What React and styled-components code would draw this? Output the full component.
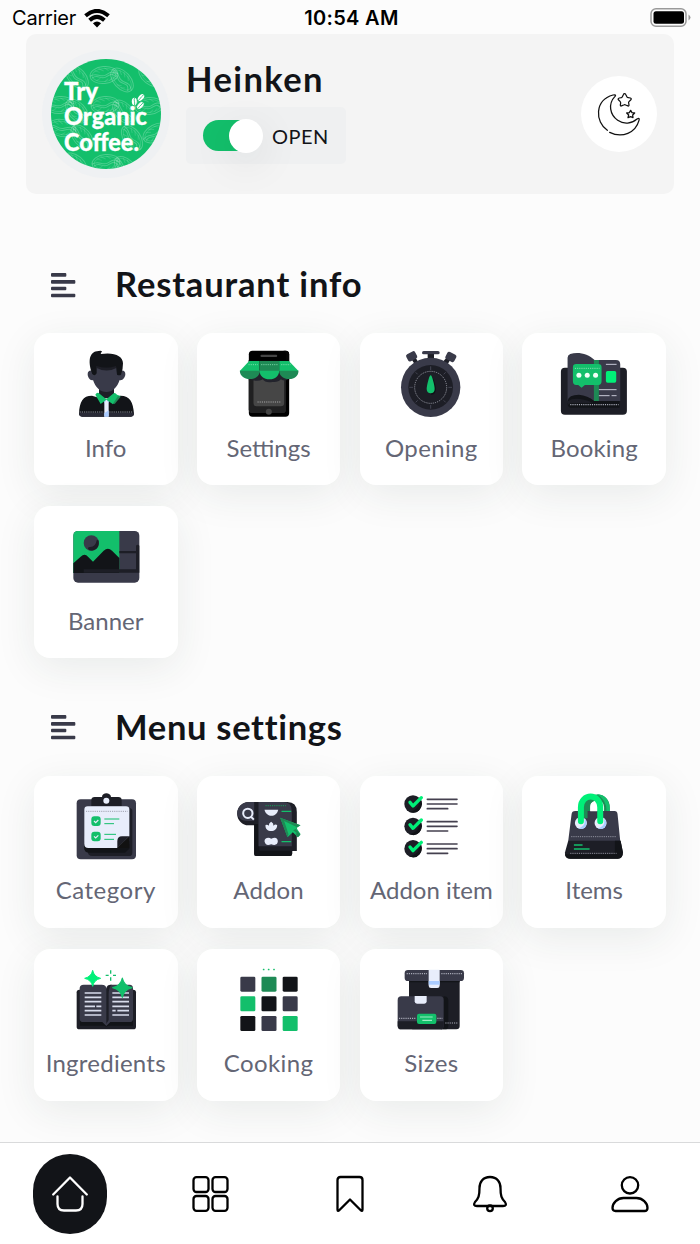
import React from "react";
import styled, { createGlobalStyle } from "styled-components";

const C = {
  ink: "#121418",
  black: "#1d1e26",
  slate: "#393a49",
  green: "#13bf6b",
  deep: "#1e8a55",
  lime: "#00f078",
  pale: "#e8edfb",
  sky: "#a9cbff",
};

const GlobalStyle = createGlobalStyle`
  *, *::before, *::after { box-sizing: border-box; }
  body { margin: 0; background: #fcfcfc; font-family: Lato, "Open Sans", sans-serif; }
`;

const Screen = styled.div`
  width: 700px;
  height: 1244px;
  display: flex;
  flex-direction: column;
  overflow: hidden;
  background: #fcfcfc;
  color: ${C.ink};
`;

const StatusBar = styled.header`
  height: 34px;
  flex: none;
  display: grid;
  grid-template-columns: 1fr auto 1fr;
  align-items: center;
  padding: 2px 9px 0 12px;
  font: 400 20px/32px Inter, sans-serif;
  color: #000;
`;

const Carrier = styled.div`
  display: flex;
  align-items: center;
  gap: 8px;
  letter-spacing: -0.2px;
`;

const Clock = styled.div`
  font-weight: 600;
  letter-spacing: 0.3px;
`;

const BatteryIcon = styled.svg`
  justify-self: end;
  display: block;
`;

const Profile = styled.section`
  height: 160px;
  flex: none;
  margin: 0 26px;
  padding: 0 17px 0 16px;
  display: flex;
  align-items: center;
  border-radius: 10px;
  background: #f4f4f4;
`;

const Avatar = styled.div`
  width: 128px;
  height: 128px;
  flex: none;
  display: grid;
  place-items: center;
  border-radius: 50%;
  background: #eff1f3;
`;

const ProfileBody = styled.div`
  flex: 1;
  padding: 0 0 7px 16px;
`;

const Name = styled.h1`
  margin: 0;
  height: 50px;
  font-size: 34.5px;
  line-height: 43px;
  font-weight: 700;
  letter-spacing: 1.4px;
`;

const OpenBox = styled.div`
  width: 160px;
  height: 57px;
  padding: 0 17px;
  display: flex;
  align-items: center;
  gap: 9px;
  border-radius: 5px;
  background: #eff0f1;
  font-size: 20px;
  letter-spacing: 0.45px;
`;

const Track = styled.span`
  width: 60px;
  height: 31px;
  display: flex;
  align-items: center;
  justify-content: flex-end;
  border-radius: 16px;
  background: linear-gradient(90deg, ${C.green} 46px, transparent 46px);
`;

const Thumb = styled.span`
  width: 34px;
  height: 34px;
  flex: none;
  border-radius: 50%;
  background: #fff;
  box-shadow: 0 10px 40px rgba(30, 40, 40, 0.1);
`;

const ThemeButton = styled.button`
  width: 76px;
  height: 76px;
  padding: 0;
  display: grid;
  place-items: center;
  border: 0;
  border-radius: 50%;
  background: #fff;
`;

const Heading = styled.h2`
  height: 48px;
  flex: none;
  margin: ${(p) => p.$top}px 0 24px;
  padding-left: 51px;
  display: flex;
  align-items: center;
  gap: 37px;
  font-size: 34.5px;
  line-height: 48px;
  font-weight: 700;
  letter-spacing: ${(p) => p.$track}px;
`;

const HeadingLabel = styled.span`
  padding-bottom: 2px;
`;

const Tiles = styled.div`
  flex: none;
  display: grid;
  grid-template-columns: repeat(4, 143.5px);
  grid-auto-rows: 152px;
  gap: 21.3px 19.3px;
  padding: 0 34px;
`;

const Tile = styled.div`
  display: flex;
  flex-direction: column;
  align-items: center;
  padding-top: 15px;
  border-radius: 16px;
  background: #fff;
  box-shadow: 0 10px 40px rgba(35, 60, 50, 0.085);
`;

const TileIcon = styled.svg`
  width: 72px;
  height: 72px;
  display: block;
`;

const TileLabel = styled.span`
  margin-top: 11.6px;
  font-size: 24px;
  line-height: 32px;
  color: #646675;
  white-space: nowrap;
  letter-spacing: ${(p) => p.$track}px;
`;

const NavBar = styled.nav`
  height: 102px;
  flex: none;
  margin-top: auto;
  display: grid;
  grid-template-columns: repeat(5, 1fr);
  place-items: center;
  border-top: 1px solid #d9dadb;
  background: #fff;
  z-index: 1;
`;

const NavItem = styled.a`
  width: 74px;
  height: 80px;
  display: grid;
  place-items: center;
  border-radius: 37px;
  color: ${(p) => (p.$active ? "#fff" : "#000")};
  background: ${(p) => (p.$active ? C.ink : "transparent")};
`;

const NavIcon = styled.svg`
  width: 40px;
  height: 40px;
  fill: none;
  stroke: currentColor;
  stroke-width: 2.3;
  stroke-linecap: round;
  stroke-linejoin: round;
`;

const Bean = ({ x, y, r = 0, s = 1 }) => (
  <g transform={`translate(${x} ${y}) rotate(${r}) scale(${s})`} fill="none" stroke="#fff" strokeOpacity="0.24" strokeWidth="1">
    <ellipse rx="14" ry="8.5" />
    <ellipse rx="12" ry="6.5" strokeOpacity="0.14" />
    <path d="M-14 0C-7-4-4 3 2 0S9-3 14 0M-12 2C-6-2-4 5 2 2S8-1 12 3" />
    <path d="M-9-5l5 2M-5-7l5 3M1-7l4 3M-8 5l4-2M0 7l4-3M5 6l3-3" strokeOpacity="0.14" />
  </g>
);

const CoffeeLogo = () => (
  <svg width="110" height="110" viewBox="51 59 110 110">
    <clipPath id="disc"><circle cx="106" cy="114" r="55" /></clipPath>
    <g clipPath="url(#disc)">
      <rect x="51" y="59" width="110" height="110" fill={C.green} />
      <Bean x={77} y={77} r={48} />
      <Bean x={104} y={75} r={-5} />
      <Bean x={122} y={80} r={48} />
      <Bean x={151} y={76} r={38} />
      <Bean x={60} y={105} r={-5} />
      <Bean x={77} y={111} r={48} />
      <Bean x={105} y={105} r={-5} />
      <Bean x={124} y={112} r={48} />
      <Bean x={149} y={106} r={-5} />
      <Bean x={82} y={137} r={50} />
      <Bean x={62} y={128} r={10} />
      <Bean x={132} y={138} r={55} />
      <Bean x={156} y={133} r={-28} />
      <Bean x={75} y={164} r={40} />
      <Bean x={106} y={163} r={-5} />
      <Bean x={126} y={168} r={45} />
    </g>
    <g fill="#fff" stroke="#fff" strokeWidth="0.3" fontFamily="Lato, sans-serif" fontWeight="900" fontSize="24">
      <text x="64" y="99.800" textLength="34" lengthAdjust="spacingAndGlyphs">Try</text>
      <text x="64" y="125.300" textLength="83" lengthAdjust="spacingAndGlyphs">Organic</text>
      <text x="64" y="151" textLength="75" lengthAdjust="spacingAndGlyphs">Coffee.</text>
    </g>
    <g fill="#fff">
      <ellipse cx="134.3" cy="101.5" rx="2.5" ry="3.7" />
      <ellipse cx="141" cy="97.5" rx="2.4" ry="4" transform="rotate(42 141 97.5)" />
      <ellipse cx="140.4" cy="105.5" rx="2.4" ry="4" transform="rotate(42 140.4 105.5)" />
    </g>
    <path d="M134.500 98c-1 2.500.8 4 0 7M143.500 94.500c-1 2.500-3 2.500-5 6M143 102.500c-1 2.500-3 2.500-5 6" stroke={C.green} strokeWidth="0.8" fill="none" />
  </svg>
);

const Moon = () => (
  <svg width="48" height="48" viewBox="735 270 144 144" fill="none" stroke="#111" strokeWidth="3.800" strokeLinecap="round" strokeLinejoin="round">
    <path d="M772 391C735 365 733 301 789 285Q800 283 795 289C773 312 780 345 803 361C822 374 845 371 861 357Q870 352 867 361C857 398 817 416 779 397" />
    <path d="M824 281q3 0 4 4l3 6q1 2 4 2l6 1q5 2 1 6l-5 5q-2 2-1 4l1 6q0 5-5 2l-5-2q-3-2-6 0l-5 2q-5 3-5-2l1-6q0-3-2-5l-4-4q-4-4 2-6l6-1q2-1 3-3l3-6q1-3 4-3z" />
    <path d="M842 331l4 7 8 1-6 6 1 8-7-3-8 3 2-8-6-6 8-1z" />
  </svg>
);

const ListMark = () => (
  <svg width="27" height="25" viewBox="92 71 81 75" fill={C.slate}>
    <rect x="92" y="71" width="46" height="11" rx="3" />
    <rect x="92" y="92" width="73" height="11" rx="3" />
    <rect x="92" y="112" width="46" height="11" rx="3" />
    <rect x="92" y="133" width="73" height="11" rx="3" />
  </svg>
);

const Stitch = ({ d, color = "#a9abb8", w = 2.4 }) => (
  <path d={d} fill="none" stroke={color} strokeWidth={w} strokeDasharray="3.500 3" />
);

const Person = () => (
  <>
    <path d="M236 405h45v40h-45z" fill={C.black} />
    <path d="M176 490C178 455 187 437 215 437L258 450L300 437C330 437 338 457 341 490Q341 500 331 500H186Q176 500 176 490z" fill={C.ink} />
    <path d="M176 488h165q0 12-10 12H186q-10 0-10-12z" fill="#292a36" />
    <path d="M252 450h13v50h-13z" fill={C.pale} />
    <path d="M252 462l6-14 7 12v-10h-13zM252 490l13-9v19h-13z" fill={C.sky} />
    <path d="M216 345q42-20 84 0v18c8-4 15 0 15 9 0 11-9 21-17 18-7 22-22 36-40 36s-33-14-40-36c-8 3-16-7-16-18 0-9 8-13 14-9z" fill={C.slate} />
    <path d="M229 344q29 15 59 0v10q-29 15-59 0z" fill={C.black} />
    <path d="M220 375q-5 0-6-8C203 333 206 304 235 303Q244 301 245 305Q239 309 242 312C282 306 308 318 308 340Q308 360 302 374Q297 377 290 374L287 348Q258 358 229 348V370Q226 377 220 375z" fill={C.ink} />
    <path d="M235 429L258 448L281 429Q286 428 290 434L301 438L278 463L258 449L241 462L225 434Q229 427 235 429z" fill={C.green} />
    <path d="M279 460l14-22 8 2-18 22z" fill={C.deep} />
    <Stitch d="M178 486h72M267 486h72" />
  </>
);

const Shop = () => (
  <>
    <rect x="685" y="302" width="121" height="198" rx="11" fill="#000" />
    <path d="M685 330h111v149q0 10-10 10H697q-12 0-12-10z" fill="#202021" />
    <path d="M685 330h111v-18q0-8-7-10h7q10 0 10 11v78H685z" fill="#050505" />
    <path d="M685 385h111v94q0 10-10 10H697q-12 0-12-10z" fill="#202021" />
    <rect x="720" y="314" width="50" height="7" rx="3" fill="#444" />
    <rect x="699" y="375" width="92" height="94" rx="10" fill="#464646" />
    <path d="M685 360h121v24q-10 13-25 4-8 10-25 8-22 4-29-8-18 10-42-2z" fill="#22232c" />
    <circle cx="745" cy="485" r="9" fill="#444" />
    <path d="M686 333h31v30h-59z" fill={C.green} />
    <path d="M717 333h59v30h-59z" fill={C.deep} />
    <path d="M776 333h29l29 30h-58z" fill={C.green} />
    <path d="M658 362h60c0 15-13 25-30 25s-30-10-30-25zM776 362h58c0 15-11 25-28 25s-30-10-30-25z" fill={C.deep} />
    <path d="M717 362h59c0 15-12 26-29 26s-30-11-30-26z" fill={C.green} />
    <Stitch d="M684 344h28M722 344h50M782 344h28" color="#8ee4b6" />
    <Stitch d="M711 456h69" w={5} color="#858585" />
  </>
);

const Stopwatch = () => (
  <>
    <path d="M234 96h19v24h-19zM187 120l10-8 10 16-10 8zM281 124l12-14 10 8-10 16z" fill={C.black} />
    <rect x="217" y="93" width="53" height="10" rx="5" fill={C.slate} />
    <rect x="171" y="97" width="30" height="24" rx="6" transform="rotate(-28 186 109)" fill={C.slate} />
    <rect x="289" y="99" width="30" height="24" rx="6" transform="rotate(28 304 110)" fill={C.slate} />
    <circle cx="243" cy="202" r="89" fill={C.slate} />
    <circle cx="243" cy="202" r="67" fill={C.black} />
    <circle cx="243" cy="202" r="48" fill="none" stroke="#aaacb8" strokeWidth="2.400" strokeDasharray="3.500 3" />
    <path d="M243 139v11M243 255v11M179 202h11M296 202h11M198 157l6 6M282 241l6 6M198 247l6-6M282 163l6-6" stroke="#444552" strokeWidth="3" />
    <path d="M248 170q10 21 11 36 0 18-16 18z" fill="#101116" />
    <path d="M243 166Q246 166 250 181Q255 199 255 207C255 215 250 220 243 220S231 215 231 207Q231 199 236 181Q240 166 243 166z" fill={C.green} />
  </>
);

const Magazine = () => (
  <>
    <rect x="633" y="143" width="198" height="141" rx="12" fill={C.black} />
    <path d="M653 250V113Q653 106 661 102C684 94 715 101 734 120H798Q811 120 811 133V243H734Q685 213 653 250z" fill={C.slate} />
    <path d="M732 120h15v123h-15z" fill={C.deep} />
    <path d="M653 243Q656 224 687 224Q714 226 732 243H809V263H662Q653 262 653 250z" fill={C.ink} />
    <path d="M653 244q26-17 76 5h-62q-8 0-14 7z" fill={C.black} />
    <path d="M679 132h66q10 0 10 10v42q0 11-10 11h-40l-10 8-10-8h-6q-10 0-10-11v-42q0-10 10-10z" fill={C.green} />
    <rect x="768" y="153" width="31" height="35" rx="5" fill={C.lime} />
    <g fill="#f1fff7"><circle cx="687" cy="166" r="7.500" /><circle cx="712" cy="166" r="7.500" /><circle cx="737" cy="166" r="7.500" /></g>
    <path d="M768 133h32M747 209h53M747 227h32M785 227h15" stroke="#c6c8d6" strokeWidth="3" />
    <Stitch d="M675 145h74" color="#9ee8c0" />
    <Stitch d="M661 254h145" w={4} />
  </>
);

const Picture = () => (
  <>
    <rect x="159" y="94" width="198" height="155" rx="14" fill={C.slate} />
    <path d="M173 94h124v126H159V108q0-14 14-14z" fill={C.green} />
    <path d="M159 191L181 171Q193 160 203 171L218 186L250 153Q263 141 275 153L297 175V220H159z" fill={C.ink} />
    <circle cx="213" cy="130" r="23" fill={C.slate} />
    <path d="M229 122q3-2 6 1 3 21-14 28-13 5-18-4-1-5 5-5 18 1 21-20z" fill={C.black} />
    <path d="M297 154h50v-16q5-6 10 0v81H190v-10h157v-48h-50z" fill={C.black} />
  </>
);

const Clipboard = () => (
  <>
    <rect x="169" y="88" width="178" height="180" rx="12" fill={C.slate} />
    <path d="M213 108V91q0-10 10-10h22c0-15 26-15 27 0h22q10 0 10 10v17z" fill={C.black} />
    <path d="M327 114q9 1 9 9v125q0 10-10 10H216q-14 0-14-14-10 0-10-10v-20h135z" fill={C.black} />
    <path d="M192 222v12q0 14 13 14h109l13-12v-14z" fill={C.ink} />
    <path d="M202 109h115q10 0 10 10v80l-36 35h-87q-12 0-12-12V119q0-10 10-10z" fill={C.pale} />
    <circle cx="258" cy="92" r="9" fill={C.pale} />
    <path d="M327 199h-22q-14 0-14 14v22z" fill={C.black} />
    <path d="M327 199v35h-36z" fill="#111" />
    <Stitch d="M197 124h125" color="#8b8d9b" />
    <rect x="213" y="139" width="28" height="29" rx="9" fill={C.green} />
    <rect x="213" y="185" width="28" height="29" rx="9" fill={C.green} />
    <path d="M221 153l5 5 8-8M221 199l5 5 8-8" fill="none" stroke="#e8edfb" strokeWidth="3.500" />
    <path d="M252 147h45M252 161h29M252 193h35M252 208h29" stroke={C.green} strokeWidth="3" />
  </>
);

const AddonMenu = () => (
  <>
    <path d="M702 96h99q28 0 28 30v117h-14v8q0 7-7 7H707q-6 0-6-7v-85h-17c-18 0-34-15-34-35s16-35 34-35z" fill={C.black} />
    <path d="M701 162h12l4 80h98v9q0 7-7 7H707q-6 0-6-7z" fill={C.ink} />
    <path d="M684 96h17v57h-17q-20 0-26-8-8-7-8-14 0-20 16-30 8-5 18-5z" fill={C.slate} />
    <path d="M714 96h74q26 0 26 28v105H714z" fill={C.slate} />
    <circle cx="682" cy="130" r="14" fill="none" stroke={C.pale} strokeWidth="6" />
    <path d="M691 140l9 9" stroke={C.pale} strokeWidth="6" />
    <path d="M732 119h41c-5 24-35 24-41 0z" fill={C.pale} />
    <path d="M735 165q6-3 10 2-1-7 7-12 8 5 7 12 5-6 11-2c0 13-8 18-18 18s-18-6-17-18z" fill={C.pale} />
    <path d="M744 203q4 0 8 3 19-8 20 8-1 15-20 9-17 7-20-9 0-11 12-11z" fill={C.pale} />
    <path d="M783 124h29M783 215h29" stroke={C.green} strokeWidth="4" />
    <Stitch d="M735 107h61" color={C.deep} w={4} />
    <path d="M779 143L840 166L828 174L840 192L832 202L817 187L801 202z" fill={C.green} />
    <path d="M779 143L840 166L830 172L791 153L804 193L801 202zM818 181l8-4 14 17-8 8-8-10 5-3z" fill={C.deep} />
  </>
);

const Checklist = () => (
  <>
    {[0, 67, 134].map((y) => (
      <g key={y} transform={`translate(0 ${y})`}>
        <circle cx="190" cy="102" r="26" fill={C.black} />
        <path d="M178 125q34-5 32-42 14 17 0 36-12 15-32 6z" fill={C.ink} />
        <path d="M181 97l9 11 25-25" fill="none" stroke={C.lime} strokeWidth="10" strokeLinecap="round" strokeLinejoin="round" />
        <path d="M233 88h89M233 102h89M233 116h61" stroke="#44404f" strokeWidth="5" strokeLinecap="round" />
      </g>
    ))}
  </>
);

const Bag = () => (
  <>
    <path d="M713 124v-12c0-40 58-40 58 0v12" fill="none" stroke={C.deep} strokeWidth="17" />
    <path d="M676 123h118q8 0 9 10l8 80H655l10-80q1-10 11-10z" fill={C.slate} />
    <path d="M655 212h157l7 35q0 19-15 19H661q-16 0-16-18z" fill={C.black} />
    <path d="M795 212h17l7 35q0 19-15 19H661q-14 0-16-13h138q14 0 12-15z" fill={C.ink} />
    <path d="M721 124V108c0-16 21-16 21 0v16z" fill="#fff" />
    <circle cx="693" cy="159" r="18" fill={C.pale} /><circle cx="752" cy="159" r="18" fill={C.pale} />
    <path d="M704 145q12 15 1 28-10 7-20 2 15-4 19-15zM763 145q12 15 1 28-10 7-20 2 15-4 19-15z" fill={C.sky} />
    <path d="M706 145v-32q0-16 15-24" fill="none" stroke={C.deep} strokeWidth="14" />
    <path d="M740 72q40 2 40 51h-10q0-34-30-51z" fill={C.green} />
    <path d="M693 154v-42c0-43 58-43 58 0v42" fill="none" stroke={C.lime} strokeWidth="18" strokeLinecap="round" />
    <path d="M672 225h26M672 237h47" stroke={C.green} strokeWidth="4" />
    <Stitch d="M664 200h136M661 250h139" />
  </>
);

const Star = ({ x, y, r, fill }) => (
  <path transform={`translate(${x} ${y}) scale(${r})`} fill={fill} d="M0-1Q.16-.2 1 0Q.16.2 0 1Q-.16.2-1 0Q-.16-.2 0-1z" stroke={fill} strokeWidth="0.120" strokeLinejoin="round" />
);

const RecipeBook = () => (
  <>
    <rect x="169" y="135" width="178" height="119" rx="8" fill={C.black} />
    <path d="M179 225h159v18h-74l-6 3-6-3h-73z" fill={C.ink} />
    <path d="M190 120h54q14 0 14 12 0-12 14-12h56q10 0 10 11v91q0 10-10 10h-58l-12 12-12-12h-57q-11 0-11-10v-91q0-11 12-11z" fill={C.slate} />
    <path d="M258 133q5-14 16-13-9 8-9 28v78l-7 12z" fill={C.black} />
    <path d="M193 145h50M193 158h50M193 171h50M193 185h31M228 185h15M193 198h50M193 211h50M276 145h50M276 158h50M276 171h50M276 185h50M276 198h10M291 198h35M276 211h50" stroke="#d8dcec" strokeWidth="5" />
    <Star x={217} y={101} r={24} fill={C.lime} />
    <path d="M271 77v10M271 98v10M256 92h9M278 92h9" stroke={C.green} strokeWidth="4" />
    <Star x={306} y={129} r={29} fill={C.green} />
  </>
);

const cells = [C.slate, C.deep, C.ink, C.green, C.ink, C.slate, C.ink, C.slate, C.green];

const Grid9 = () => (
  <>
    {cells.map((fill, i) => (
      <rect key={i} x={659.5 + (i % 3) * 63.5} y={96 + Math.floor(i / 3) * 59} width="45" height="45" rx="4" fill={fill} />
    ))}
    <g fill={C.green}><rect x="727" y="72" width="5" height="5" rx="1.500" /><rect x="742" y="72" width="5" height="5" rx="1.500" /><rect x="758" y="72" width="5" height="5" rx="1.500" /></g>
  </>
);

const Boxes = () => (
  <>
    <path d="M178 100h152v144q0 10-10 10H188l-10-10z" fill={C.black} />
    <path d="M178 108h152v5H178zM282 155q14 0 14 13v75q0 11-10 11h-12z" fill={C.ink} />
    <rect x="165" y="76" width="178" height="33" rx="10" fill={C.slate} />
    <path d="M237 75h33v48q0 7-7 7h-19q-7 0-7-7z" fill={C.pale} />
    <path d="M237 109h33v11h-33z" fill={C.sky} />
    <rect x="144" y="155" width="138" height="99" rx="11" fill={C.slate} />
    <path d="M144 230h138v13q0 11-11 11H155q-11 0-11-11z" fill={C.black} />
    <path d="M195 154h36v16q0 7-7 7h-22q-7 0-7-7z" fill={C.pale} />
    <rect x="202" y="207" width="58" height="31" rx="6" fill={C.green} />
    <path d="M211 217h38M218 227h29" stroke="#9becc4" strokeWidth="3.500" />
    <Stitch d="M171 87h61M275 87h62M148 221h51M263 221h15M287 235h38" w={3.5} />
  </>
);

const sections = [
  {
    title: "Restaurant info", top: 67, track: 0.85,
    tiles: [
      { label: "Info", art: Person, box: [149, 294] },
      { label: "Settings", art: Shop, box: [637.5, 294] },
      { label: "Opening", art: Stopwatch, box: [136, 84], track: 0.35 },
      { label: "Booking", art: Magazine, box: [624.3, 84], track: 0.15 },
      { label: "Banner", art: Picture, box: [149, 64] },
    ],
  },
  {
    title: "Menu settings", top: 45.3, track: 0.7,
    tiles: [
      { label: "Category", art: Clipboard, box: [149, 63], track: 0.5 },
      { label: "Addon", art: AddonMenu, box: [637.5, 63], track: 0.1 },
      { label: "Addon item", art: Checklist, box: [136, 63] },
      { label: "Items", art: Bag, box: [624.3, 63] },
      { label: "Ingredients", art: RecipeBook, box: [149, 58], track: 0.25 },
      { label: "Cooking", art: Grid9, box: [637.5, 58], track: 0.4 },
      { label: "Sizes", art: Boxes, box: [136, 58], track: 0.4 },
    ],
  },
];

const navIcons = [
  <path key="home" d="M3.2 20.500L20 3.500l16.800 17M7.500 22.500v7.500q0 6.500 6.500 6.500h12q6.500 0 6.500-6.500v-7.500" />,
  <g key="grid"><rect x="3.500" y="3.200" width="15" height="14.800" rx="3" /><rect x="22.500" y="3.200" width="15" height="14.800" rx="3" /><rect x="3.500" y="22" width="15" height="14.800" rx="3" /><rect x="22.500" y="22" width="15" height="14.800" rx="3" /></g>,
  <path key="bookmark" d="M10.500 3h19Q32.500 3 32.500 6v29.500q0 2.500-2 .500L20 25.500 9.500 36q-2 2-2-.500V6q0-3 3-3z" />,
  <g key="bell"><path d="M20 3c7 0 10.500 5 10.500 11 0 8 1 10.500 4.500 14q2.500 4-2 4H7q-4.500 0-2-4c3.500-3.500 4.500-6 4.500-14C9.500 8 13 3 20 3z" /><circle cx="20" cy="34.300" r="2.800" /></g>,
  <g key="user"><circle cx="20" cy="11.300" r="8.200" /><path d="M13.500 24h13c6 0 11 5 11 10q0 3-3 3h-29q-3 0-3-3c0-5 5-10 11-10z" /></g>,
];

export default function App() {
  return (
    <Screen>
      <GlobalStyle />
      <StatusBar>
        <Carrier>
          Carrier
          <svg width="26" height="19" viewBox="0 0 26 19" fill="none" stroke="#000" strokeWidth="4">
            <path d="M1.500 6.800Q13-3 24.500 6.800M5.600 11.200q7.400-6.500 14.800 0" />
            <path d="M13 18.500L8.900 14.300q4.100-3.400 8.200 0z" fill="#000" stroke="none" />
          </svg>
        </Carrier>
        <Clock>10:54 AM</Clock>
        <BatteryIcon width="41" height="20" viewBox="0 0 41 20">
          <rect x="1" y="0.800" width="35" height="17.500" rx="5" fill="none" stroke="#999" strokeWidth="1.500" />
          <rect x="3.500" y="3.200" width="30.500" height="12.500" rx="2.500" />
          <path d="M38.500 6.500q4 3 0 6z" fill="#999" />
        </BatteryIcon>
      </StatusBar>
      <Profile>
        <Avatar><CoffeeLogo /></Avatar>
        <ProfileBody>
          <Name>Heinken</Name>
          <OpenBox><Track><Thumb /></Track>OPEN</OpenBox>
        </ProfileBody>
        <ThemeButton aria-label="Dark mode"><Moon /></ThemeButton>
      </Profile>
      {sections.map((s) => (
        <React.Fragment key={s.title}>
          <Heading $top={s.top} $track={s.track}><ListMark /><HeadingLabel>{s.title}</HeadingLabel></Heading>
          <Tiles>
            {s.tiles.map(({ label, art: Art, box, track = 0 }) => (
              <Tile key={label}>
                <TileIcon viewBox={`${box[0]} ${box[1]} 216 216`}><Art /></TileIcon>
                <TileLabel $track={track}>{label}</TileLabel>
              </Tile>
            ))}
          </Tiles>
        </React.Fragment>
      ))}
      <NavBar>
        {navIcons.map((icon, i) => (
          <NavItem key={i} $active={i === 0}><NavIcon viewBox="0 0 40 40">{icon}</NavIcon></NavItem>
        ))}
      </NavBar>
    </Screen>
  );
}
